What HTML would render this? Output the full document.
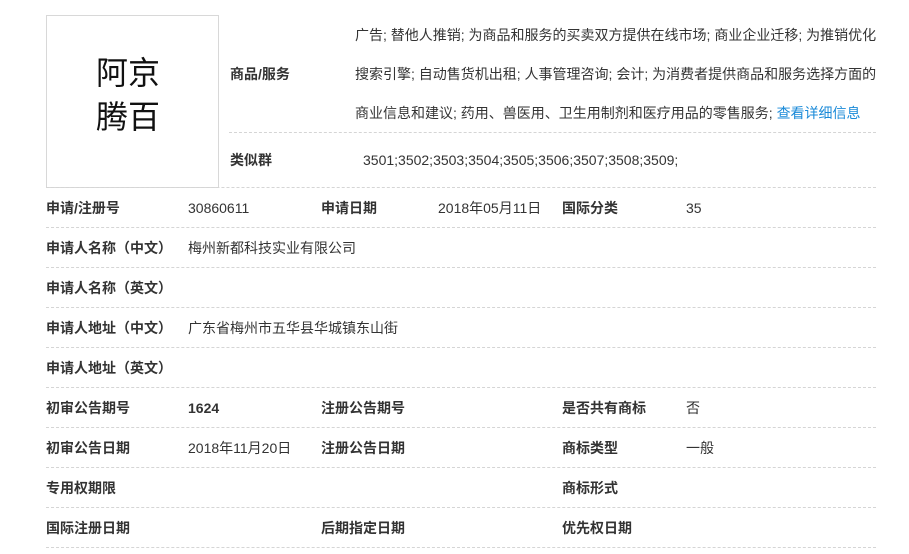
<!DOCTYPE html><html><head><meta charset="utf-8"><style>
body{margin:0;background:#fff;width:909px;height:554px;overflow:hidden;position:relative;font-family:"Liberation Sans","Noto Sans CJK SC",sans-serif;font-size:14px;color:#333}
.a{position:absolute;white-space:nowrap;line-height:16px}
.b{font-weight:bold}
.h{position:absolute;border-top:1px dashed #d5d5d5;height:0}
.box{position:absolute;left:46px;top:15px;width:171px;height:171px;border:1px solid #d8d8d8}
.logo{position:absolute;left:96px;top:49px;font-size:32px;line-height:44px;color:#111;font-family:"Noto Sans CJK SC",sans-serif}
</style></head><body>
<div class="box"></div>
<div class="logo">阿京<br>腾百</div>
<div class="a b" style="left:230px;top:66px">商品/服务</div>
<div class="a" style="left:355px;top:27px">广告; 替他人推销; 为商品和服务的买卖双方提供在线市场; 商业企业迁移; 为推销优化</div>
<div class="a" style="left:355px;top:66px">搜索引擎; 自动售货机出租; 人事管理咨询; 会计; 为消费者提供商品和服务选择方面的</div>
<div class="a" style="left:355px;top:105px">商业信息和建议; 药用、兽医用、卫生用制剂和医疗用品的零售服务; <span style="color:#1a8ad8">查看详细信息</span></div>
<div class="h" style="left:229px;top:132px;width:647px"></div>
<div class="a b" style="left:230px;top:152px">类似群</div>
<div class="a" style="left:363px;top:152px">3501;3502;3503;3504;3505;3506;3507;3508;3509;</div>
<div class="h" style="left:46px;top:187px;width:830px"></div>

<div class="a b" style="left:46px;top:200px">申请/注册号</div><div class="a" style="left:188px;top:200px">30860611</div>
<div class="a b" style="left:321px;top:200px">申请日期</div><div class="a" style="left:438px;top:200px">2018年05月11日</div>
<div class="a b" style="left:562px;top:200px">国际分类</div><div class="a" style="left:686px;top:200px">35</div>
<div class="h" style="left:46px;top:227px;width:830px"></div>
<div class="a b" style="left:46px;top:240px">申请人名称（中文）</div><div class="a" style="left:188px;top:240px">梅州新都科技实业有限公司</div>
<div class="h" style="left:46px;top:267px;width:830px"></div>
<div class="a b" style="left:46px;top:280px">申请人名称（英文）</div>
<div class="h" style="left:46px;top:307px;width:830px"></div>
<div class="a b" style="left:46px;top:320px">申请人地址（中文）</div><div class="a" style="left:188px;top:320px">广东省梅州市五华县华城镇东山街</div>
<div class="h" style="left:46px;top:347px;width:830px"></div>
<div class="a b" style="left:46px;top:360px">申请人地址（英文）</div>
<div class="h" style="left:46px;top:387px;width:830px"></div>
<div class="a b" style="left:46px;top:400px">初审公告期号</div><div class="a b" style="left:188px;top:400px">1624</div>
<div class="a b" style="left:321px;top:400px">注册公告期号</div>
<div class="a b" style="left:562px;top:400px">是否共有商标</div><div class="a" style="left:686px;top:400px">否</div>
<div class="h" style="left:46px;top:427px;width:830px"></div>
<div class="a b" style="left:46px;top:440px">初审公告日期</div><div class="a" style="left:188px;top:440px">2018年11月20日</div>
<div class="a b" style="left:321px;top:440px">注册公告日期</div>
<div class="a b" style="left:562px;top:440px">商标类型</div><div class="a" style="left:686px;top:440px">一般</div>
<div class="h" style="left:46px;top:467px;width:830px"></div>
<div class="a b" style="left:46px;top:480px">专用权期限</div>
<div class="a b" style="left:562px;top:480px">商标形式</div>
<div class="h" style="left:46px;top:507px;width:830px"></div>
<div class="a b" style="left:46px;top:520px">国际注册日期</div>
<div class="a b" style="left:321px;top:520px">后期指定日期</div>
<div class="a b" style="left:562px;top:520px">优先权日期</div>
<div class="h" style="left:46px;top:547px;width:830px"></div>
</body></html>
